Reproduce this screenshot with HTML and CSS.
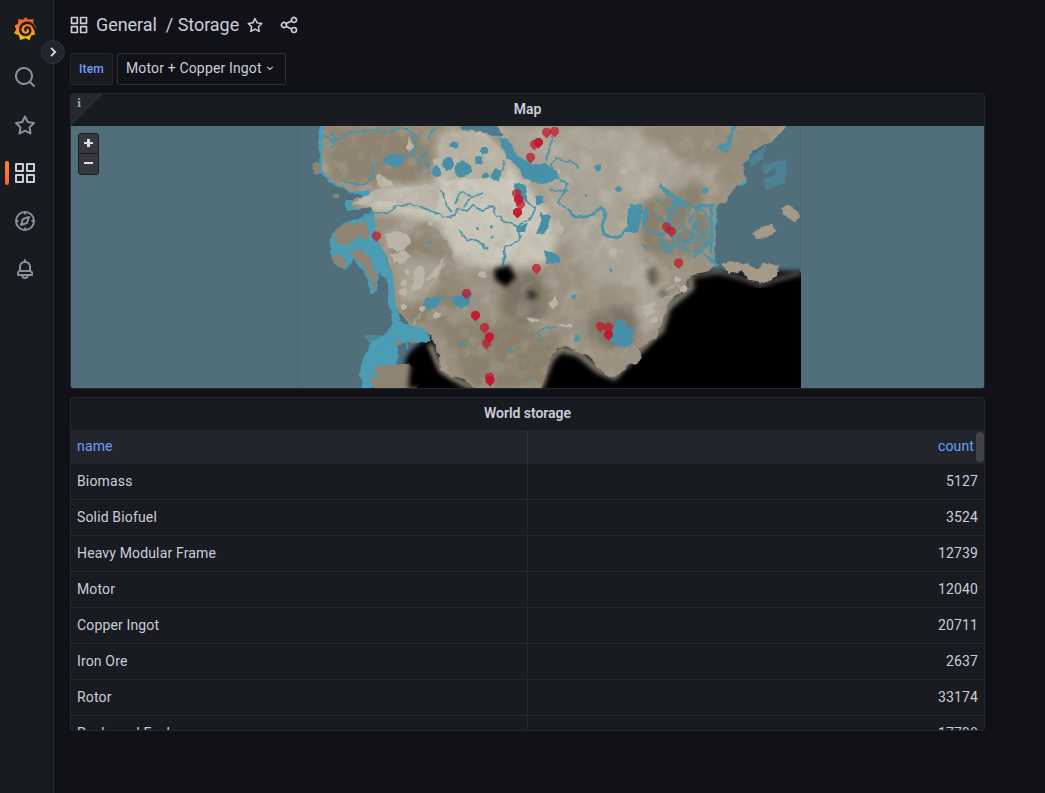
FILE: index.html
```html
<!DOCTYPE html>
<html lang="en">
<head>
<meta charset="utf-8">
<title>General / Storage</title>
<link rel="stylesheet" href="styles.css">
</head>
<body>
<svg class="defs" width="0" height="0">
  <symbol id="apps" viewBox="0 0 24 24"><path d="M10,13H3a1,1,0,0,0-1,1v7a1,1,0,0,0,1,1h7a1,1,0,0,0,1-1V14A1,1,0,0,0,10,13ZM9,20H4V15H9ZM21,2H14a1,1,0,0,0-1,1v7a1,1,0,0,0,1,1h7a1,1,0,0,0,1-1V3A1,1,0,0,0,21,2ZM20,9H15V4h5Zm1,4H14a1,1,0,0,0-1,1v7a1,1,0,0,0,1,1h7a1,1,0,0,0,1-1V14A1,1,0,0,0,21,13Zm-1,7H15V15h5ZM10,2H3A1,1,0,0,0,2,3v7a1,1,0,0,0,1,1h7a1,1,0,0,0,1-1V3A1,1,0,0,0,10,2ZM9,9H4V4H9Z"/></symbol>
  <symbol id="star" viewBox="0 0 24 24"><path d="M22,9.67A1,1,0,0,0,21.14,9l-5.69-.83L12.9,3a1,1,0,0,0-1.8,0L8.55,8.16,2.86,9a1,1,0,0,0-.81.68,1,1,0,0,0,.25,1l4.13,4-1,5.68A1,1,0,0,0,6.9,21.44L12,18.77l5.1,2.67a.93.93,0,0,0,.46.12,1,1,0,0,0,.59-.19,1,1,0,0,0,.4-1l-1-5.68,4.13-4A1,1,0,0,0,22,9.67Zm-6.15,4a1,1,0,0,0-.29.88l.72,4.2-3.76-2a1.06,1.06,0,0,0-.94,0l-3.76,2,.72-4.2a1,1,0,0,0-.29-.88l-3-3,4.21-.61a1,1,0,0,0,.76-.55L12,5.7l1.88,3.82a1,1,0,0,0,.76.55l4.21.61Z"/></symbol>
</svg>
<div class="app">
  <nav class="sidebar">
    <a class="nav-item logo">
      <svg width="24" height="26" viewBox="0 0 24 26">
        <defs><linearGradient id="lg" x1="0" y1="0" x2="0" y2="1"><stop offset="0" stop-color="#f1502a"/><stop offset=".45" stop-color="#f5802a"/><stop offset="1" stop-color="#fcc80c"/></linearGradient></defs>
        <path fill="url(#lg)" d="M12.8 1 15 3.6 20.3 3.1 20.4 7.2 23 11 21.2 13.8 22 18.6 18.2 19.6 16.5 24.2 12.8 22.3 7 24 6 19.6 1 17.3 3.1 13.2 1.6 9.4 5 7.8 5.4 3 10 3.8Z"/>
        <path fill="none" stroke="#181b1f" stroke-width="2.4" stroke-linecap="round" d="M21.500 12.500C20.500 8 16.500 6 12.500 7 8.500 8 6.500 11.500 7.300 15 8.300 19 13.500 20.200 16.200 17.600 18.300 15.500 17.400 12 14.800 11.500 12.800 11.200 11.600 12.900 12.600 14.400"/>
      </svg>
    </a>
    <a class="nav-item"><svg class="i24" viewBox="0 0 24 24"><path d="M21.71,20.29,18,16.61A9,9,0,1,0,16.61,18l3.68,3.68a1,1,0,0,0,1.42,0A1,1,0,0,0,21.71,20.29ZM11,18a7,7,0,1,1,7-7A7,7,0,0,1,11,18Z"/></svg></a>
    <a class="nav-item"><svg class="i24"><use href="#star"/></svg></a>
    <a class="nav-item active"><svg class="i24"><use href="#apps"/></svg></a>
    <a class="nav-item"><svg class="i24 line" viewBox="0 0 24 24"><circle cx="12" cy="12" r="9"/><path d="M16 8 14 14 8 16 10 10ZM12 3V5.500M12 18.500V21M3 12H5.500M18.500 12H21"/></svg></a>
    <a class="nav-item"><svg class="i24" viewBox="0 0 24 24"><path d="M18,13.18V10a6,6,0,0,0-5-5.91V3a1,1,0,0,0-2,0V4.09A6,6,0,0,0,6,10v3.18A3,3,0,0,0,4,16v2a1,1,0,0,0,1,1H8.14a4,4,0,0,0,7.72,0H19a1,1,0,0,0,1-1V16A3,3,0,0,0,18,13.18ZM8,10a4,4,0,0,1,8,0v3H8Zm4,10a2,2,0,0,1-1.72-1h3.44A2,2,0,0,1,12,20Zm6-3H6V16a1,1,0,0,1,1-1H17a1,1,0,0,1,1,1Z"/></svg></a>
    <button class="toggle"><svg width="12" height="12" viewBox="0 0 12 12"><path d="M4 1.800 8.200 6 4 10.200"/></svg></button>
  </nav>
  <main class="main">
    <header class="toolbar">
      <svg class="i19"><use href="#apps"/></svg>
      <h1 class="crumbs"><span>General</span><span>/ Storage</span></h1>
      <svg class="i18"><use href="#star"/></svg>
      <svg class="i19 share" viewBox="0 0 24 24"><path d="M18,14a4,4,0,0,0-3.08,1.48l-5.1-2.35a3.64,3.64,0,0,0,0-2.26l5.1-2.35A4,4,0,1,0,14,6a4.17,4.17,0,0,0,.07.71L8.79,9.14a4,4,0,1,0,0,5.72l5.28,2.43A4.17,4.17,0,0,0,14,18a4,4,0,1,0,4-4ZM18,4a2,2,0,1,1-2,2A2,2,0,0,1,18,4ZM6,14a2,2,0,1,1,2-2A2,2,0,0,1,6,14Zm12,6a2,2,0,1,1,2-2A2,2,0,0,1,18,20Z"/></svg>
    </header>
    <div class="vars">
      <span class="var-label">Item</span>
      <span class="var-value">Motor + Copper Ingot<svg width="8" height="8" viewBox="0 0 8 8"><path d="M1.300 2.800 4 5.400 6.700 2.800"/></svg></span>
    </div>
    <section class="panel map-panel">
      <span class="corner"></span><span class="info">i</span>
      <h2 class="title">Map</h2>
      <div class="map">
        <svg class="world" width="913" height="262" viewBox="71 126 913 262">
          <defs>
            <filter id="rough" x="-5%" y="-5%" width="110%" height="110%"><feTurbulence type="fractalNoise" baseFrequency=".13" numOctaves="2" seed="4" result="n"/><feDisplacementMap in="SourceGraphic" in2="n" scale="5" xChannelSelector="R" yChannelSelector="G"/><feGaussianBlur stdDeviation=".55"/></filter>
            <filter id="soft"><feGaussianBlur stdDeviation="4"/></filter>
            <filter id="halo" x="-20%" y="-20%" width="140%" height="140%"><feGaussianBlur stdDeviation="2.5"/></filter>
            <filter id="grain" x="0" y="0" width="100%" height="100%"><feTurbulence type="fractalNoise" baseFrequency=".05" numOctaves="4" seed="9"/><feColorMatrix values="0 0 0 0 .84  0 0 0 0 .82  0 0 0 0 .77  2.4 0 0 0 -1.1"/></filter>
            <filter id="shade" x="0" y="0" width="100%" height="100%"><feTurbulence type="fractalNoise" baseFrequency=".06" numOctaves="4" seed="21"/><feColorMatrix values="0 0 0 0 .3  0 0 0 0 .27  0 0 0 0 .22  2.4 0 0 0 -1.15"/></filter>
            <path id="land" d="M324 124 L322 170 L336 184 L353 192 L371 190 L369 195 L354 200 L350 206 L358 209 L371 207 L374 215 L377 240 L386 254 L393 275 L396 308 L410 325 L424 329 L431 336 L438 352 L441 370 L452 377 L466 380 L476 390 H541 L546 374 L550 359 L557 347 L568 346 L577 352 L591 358 L600 370 L612 376 L624 370 L639 350 L655 338 L662 325 L667 306 L674 296 L690 290 L686 283 L690 276 L709 272 L714 264 L715 207 L725 202 L735 187 L745 180 L743 164 L752 151 L773 140 L789 124Z"/>
            <clipPath id="lc"><use href="#land"/></clipPath>
            <path id="p" d="M-2-5H2L4.500-2.500V1L0 5.500-4.500 1V-2.500Z"/>
          </defs>
          <path class="sea" d="M71 126H984V388H71Z"/>
          <path d="M402 392 406 358 416 346 430 336 550 345 640 340 696 271 801 271 812 271V392Z" fill="#000" filter="url(#halo)"/>
          <g fill="none" stroke="#8f897c" stroke-width="6" filter="url(#halo)"><path d="M430 344 440 370 452 378 474 388M540 388 550 360 560 349 578 353 598 370 614 377 638 352 661 330 668 307 691 288 690 277"/></g>
          <path d="M690 277 718 272 738 277 760 285 775 280 801 273" fill="none" stroke="#77756c" stroke-width="3" filter="url(#halo)"/>
          <g class="water" filter="url(#rough)">
            <path d="M320 124H328V168L344 183 373 189 392 182 392 196 366 198 350 192 334 185 319 172ZM346 200H360V210H346ZM371 212 383 220 384 250 394 278 396 306 402 324 425 329 431 341 421 343 398 342 397 362 391 368 382 372 384 388H364L359 376 363 360 371 342 384 335 393 323 389 302 387 281 379 273 377 291 371 294 365 274 353 257 348 269 338 268 330 252 331 236 344 223 362 217ZM789 124 773 138 753 151 744 164 746 184 735 186 738 164 750 150 775 128Z"/>
            <path d="M710 202 717 200 715 265 706 268Z"/>
            <path d="M364 334 385 336 388 342 378 350 368 344Z" opacity=".55"/>
          </g>
          <g fill="#4d8193" filter="url(#rough)"><path d="M748 159 766 145 764 158 750 166ZM762 166 774 162 778 160 786 160 786 183 766 189 763 179 774 176 776 168 764 174Z"/></g>
          <g filter="url(#rough)">
            <use href="#land" fill="#9b9180"/>
            <path fill="#a39a89" d="M721 264 730 261 742 264 740 271 729 274ZM738 268 746 263 757 269 764 262 778 266 777 276 764 284 751 281ZM780 207 789 205 798 211 800 217 794 222 783 214ZM753 233 763 227 773 224 776 231 766 238 757 239Z"/>
            <path fill="#8f8473" d="M334 233Q338 224 350 223L366 222 370 235 363 247 348 249 336 243ZM332 254 340 254 348 265 343 269 335 264ZM348 252 360 248 371 260 377 277 374 291 369 277 361 264ZM372 371Q382 364 391 364L406 363 418 370 420 380 415 392H378L370 381ZM314 163 319 163 320 170 317 175 313 172ZM332 194H338V198H332ZM396 340H400V345H396ZM411 339H415V344H411Z"/>
            <path fill="#9c9586" d="M625 356a8 8 0 1 0 16 0 8 8 0 1 0-16 0M604 371a8 6 0 1 0 16 0"/>
          </g>
          <g class="water" filter="url(#rough)"><ellipse cx="374" cy="376" rx="4" ry="3"/><path d="M344 246 360 236 372 244 373 250 362 246 350 252Z"/></g>
          <g clip-path="url(#lc)">
            <g filter="url(#soft)">
              <path fill="#8e836f" d="M326 126H430L440 160 410 185 370 188 330 178ZM388 250 430 222 445 250 460 300 445 330 402 320Z"/>
              <path fill="#c8c4b8" d="M440 135 480 130 505 155 548 210 560 240 545 265 490 268 455 260 440 225 375 210 360 200 385 188 435 185Z"/>
              <path fill="#aaa496" d="M490 126H640L650 180 690 175 640 240 650 290 590 280 565 235 520 160Z"/>
              <path fill="#6f6657" d="M505 280 530 270 548 285 545 315 520 325 500 310ZM590 315 625 303 645 330 618 352 590 338Z" opacity=".7"/>
              <path fill="#8a7f6c" d="M440 325 500 320 560 335 550 388H470ZM640 200 700 185 712 240 690 260 640 250Z"/>
              <path fill="#958b79" d="M640 126H780L735 180 695 185Z"/>
              <path fill="#b5aea0" d="M630 130 690 165 723 185 716 190 680 170 640 205 620 190ZM395 255 445 260 440 282 425 300 400 305ZM635 270 665 285 660 325 640 335Z" opacity=".7"/>
            </g>
            <path fill="#b8b2a4" d="M445 136Q462 127 491 138L510 160 505 178 445 180 433 173ZM376 176 379 173 396 186 380 188Z" filter="url(#rough)"/>
            <path fill="#bdb7ab" d="M352 205 374 190 388 188 400 192 422 185 440 186 436 210 404 208 390 200 370 203Z" filter="url(#rough)"/>
            <path fill="#948a79" d="M411 229 425 222 438 230 452 250 454 264 439 258 424 246ZM445 260 463 276 470 294 448 297 440 280Z" filter="url(#rough)" opacity=".8"/>
            <path fill="#5c5547" d="M647 271 655 266 658 282 651 287ZM658 290 668 291 666 298 660 297Z" filter="url(#halo)"/>
            <rect x="300" y="126" width="500" height="262" filter="url(#grain)" opacity=".22"/>
            <rect x="300" y="126" width="500" height="262" filter="url(#shade)" opacity=".26"/>
            <g fill="#bab4a7" filter="url(#rough)">
              <path d="M385 235 399 231 408 234 410 242 404 250 397 252 388 246ZM391 255 405 250 410 256 402 264 394 263ZM415 268 423 266 426 280 418 290 411 291 413 280ZM406 148 410 136 414 146 410 152ZM553 225 559 219 563 230 548 237ZM525 316 540 320 533 324ZM548 305 555 296 558 304 552 310ZM558 324 571 324 571 328ZM642 306 651 302 655 313 646 318ZM434 270 444 258 438 276 426 280Z"/>
              <circle cx="403" cy="292" r="4.500"/><circle cx="422" cy="309" r="3"/><circle cx="437" cy="315" r="3"/><circle cx="613" cy="252" r="4"/><circle cx="624" cy="171" r="4"/><circle cx="557" cy="171" r="3"/><circle cx="437" cy="163" r="3.500"/><circle cx="638" cy="215" r="4.500"/><circle cx="653" cy="304" r="3"/><circle cx="431" cy="223" r="3"/><circle cx="684" cy="289" r="4"/><circle cx="483" cy="274" r="4"/><circle cx="480" cy="139" r="4"/><circle cx="404" cy="307" r="3"/><circle cx="407" cy="272" r="2.500"/><circle cx="404" cy="283" r="3"/><circle cx="654" cy="320" r="3"/><circle cx="677" cy="279" r="3"/><circle cx="560" cy="229" r="4"/><circle cx="525" cy="181" r="4"/>
            </g>
            <g fill="none" stroke="#b7b0a2" stroke-width="2" opacity=".6" filter="url(#rough)"><path d="M420 312 412 328M445 262 438 275 427 290M665 292 676 283 684 290M662 299 678 292"/></g>
          </g>
          <g class="deep" filter="url(#rough)">
            <ellipse cx="394" cy="160" rx="10" ry="6.500"/><circle cx="448" cy="164" r="6"/><circle cx="463" cy="169" r="8.500"/><circle cx="454" cy="144" r="3.500"/><circle cx="437" cy="172" r="5"/><circle cx="479" cy="160" r="4"/><circle cx="484" cy="151" r="3"/><circle cx="496" cy="175" r="5.500"/><circle cx="485" cy="176" r="3"/>
            <path d="M499 138 508 139 513 151 526 162 545 164 556 170 560 178 543 184 532 183 522 176 517 165 506 157ZM514 182 525 185 528 203 516 196ZM517 226 528 224 524 233 518 232ZM594 166 600 164 602 168 597 172ZM534 197 543 196 545 202 537 205ZM541 213 550 216 549 226 544 234 534 235 540 226ZM542 249 550 251 561 257 560 263 547 263ZM427 298 440 296 438 305 430 310 423 304ZM454 296 471 292 470 305 462 309 452 304ZM618 319 624 320 627 328 634 327 631 344 620 347 608 338ZM571 296 576 294 575 300 570 299ZM628 209 641 203 641 220 638 232 626 233ZM461 294 468 297 470 302 464 308 455 304Z"/>
          </g>
          <path d="M460 122H492L504 135 492 136 480 131 462 130Z" fill="#4b7c8f" filter="url(#rough)"/>
          <g class="river" filter="url(#rough)">
            <path d="M323 135 332 140 345 137 350 132 377 130 387 133 401 127 412 132 417 140 413 154 420 164 427 165 430 174M417 146 426 151 422 156 430 167M435 126 428 141M330 149 334 146 332 132M403 157 388 163 373 165 372 179 362 185 341 181M403 157 413 154M361 220 372 213 385 213 399 205 417 205 431 211 440 214 444 218 455 215 458 209 467 211 472 206 482 210 493 206 495 213 503 221 517 226 526 221 533 217 534 207 526 200 526 190M442 189 445 202 452 212M464 207 470 198 483 193M455 204 460 192 474 196M459 230 468 241 475 240 489 250M504 262 506 246 518 241 520 236 517 230M504 160 504 169 498 178M549 172 555 159 573 162 579 169M560 180 568 184 563 194 558 202 566 208M550 190 568 191"/>
            <path d="M440 300 450 296 460 295M539 342 539 332 544 328 557 326M503 265 504 250M552 136 547 161M407 340 407 350"/>
          </g>
          <g fill="#4a94aa" filter="url(#rough)"><circle cx="430" cy="242" r="1.500"/><circle cx="441" cy="251" r="1.500"/><circle cx="464" cy="345" r="2.500"/><circle cx="511" cy="351" r="2.500"/><circle cx="531" cy="380" r="2"/><circle cx="577" cy="338" r="3"/><circle cx="586" cy="195" r="2"/><circle cx="619" cy="188" r="3"/><circle cx="705" cy="191" r="2.500"/><circle cx="492" cy="227" r="2"/><circle cx="478" cy="228" r="2"/><circle cx="492" cy="237" r="1.500"/><circle cx="610" cy="270" r="1.500"/></g>
          <path class="river mid" filter="url(#rough)" d="M567 209 577 218 590 216 602 207 606 214 602 225 604 235 612 238 622 235 630 224 634 210"/>
          <path class="river mid" filter="url(#rough)" d="M640 208 647 220M668 196 660 184 666 190 678 200 668 213 672 230 660 236 645 229 643 218 650 208M680 200 695 207 713 205M711 206 712 220 711 241 711 255M735 126 729 140 728 151 720 147 731 143M640 207 630 206M706 256 718 265"/>
          <path class="river" filter="url(#rough)" d="M678 202 692 206 704 211 710 220 706 229 711 241 700 248 693 257M662 190 671 196 677 209 675 218M684 217 678 231 682 242 696 241 706 230M696 219 692 233 699 242 707 238M680 235 689 251 701 250 707 256M663 238 672 249 666 254 660 243M687 215 697 226 705 218M674 236 684 252M693 260 712 240M655 213 668 226 674 246 690 249M657 199 668 206M668 191 681 205 689 211M681 225 693 236 686 244M698 207 690 223 703 238M658 241 672 252M642 245 648 249"/>
          <g fill="#000"><path filter="url(#halo)" d="M494 269 509 265 516 277 506 287 495 280ZM412 352 426 350 438 374 460 388H408Z"/><path filter="url(#halo)" fill="#33302e" d="M526 293 532 289 538 296 531 301Z"/></g>
          <path d="M297.500 126V388" stroke="#456672" fill="none"/>
          <path class="sea" d="M801 126H984V388H801Z"/>
          <path d="M800.500 126V272" stroke="#49626d"/>
          <g fill="#c4162a">
            <g fill-opacity=".72"><use href="#p" x="546.500" y="133"/><use href="#p" x="554.500" y="132"/><use href="#p" x="534.500" y="145"/><use href="#p" x="530.500" y="158"/><use href="#p" x="516.500" y="194"/><use href="#p" x="520.500" y="205"/><use href="#p" x="376.500" y="236.500"/><use href="#p" x="666.500" y="227.500"/><use href="#p" x="671.500" y="232"/><use href="#p" x="678.500" y="263.500"/><use href="#p" x="536.500" y="269"/><use href="#p" x="466.500" y="294"/><use href="#p" x="484.500" y="328"/><use href="#p" x="486.500" y="344"/><use href="#p" x="600.500" y="327"/><use href="#p" x="608.500" y="328"/><use href="#p" x="489.500" y="377.500"/></g>
            <g fill-opacity=".95"><use href="#p" x="538.500" y="143"/><use href="#p" x="518.500" y="200"/><use href="#p" x="517.500" y="213"/><use href="#p" x="475.500" y="316"/><use href="#p" x="489.500" y="337.500"/><use href="#p" x="608.500" y="335"/><use href="#p" x="490" y="381"/></g>
          </g>
        </svg>
        <div class="zoomer"><b class="plus"></b><b class="minus"></b></div>
      </div>
    </section>
    <section class="panel table-panel">
      <h2 class="title">World storage</h2>
      <div class="row head"><span>name</span><span>count</span></div>
      <div class="row"><span>Biomass</span><span>5127</span></div>
      <div class="row"><span>Solid Biofuel</span><span>3524</span></div>
      <div class="row"><span>Heavy Modular Frame</span><span>12739</span></div>
      <div class="row"><span>Motor</span><span>12040</span></div>
      <div class="row"><span>Copper Ingot</span><span>20711</span></div>
      <div class="row"><span>Iron Ore</span><span>2637</span></div>
      <div class="row"><span>Rotor</span><span>33174</span></div>
      <div class="row"><span>Packaged Fuel</span><span>17798</span></div>
      <i class="thumb"></i>
    </section>
  </main>
</div>
</body>
</html>
```
FILE: styles.css
```css
* { box-sizing: border-box; }
body { margin: 0; background: #111217; color: #ccccdc; font: 14px/20px Roboto, sans-serif; letter-spacing: .15px; overflow: hidden; }
svg { display: block; flex: none; }
.defs { position: absolute; }
.app { display: flex; height: 793px; }
.sidebar { position: relative; width: 54px; background: #181b1f; border-right: 1px solid #25272c; padding-top: 5px; flex: none; }
.nav-item { position: relative; display: flex; align-items: center; justify-content: center; height: 48px; padding-right: 3px; color: #8e8e9b; }
.logo { padding-right: 4px; }
.i24 { width: 24px; height: 24px; fill: currentColor; }
.i19 { width: 20px; height: 20px; fill: currentColor; }
.i18 { width: 18px; height: 18px; fill: currentColor; }
.line { fill: none; stroke: currentColor; stroke-width: 2; stroke-linejoin: round; }
.line path { stroke-width: 2; }
.active { color: #ccccdc; }
.active::before { content: ""; position: absolute; left: 5px; top: 12px; width: 4px; height: 24px; border-radius: 2px; background: linear-gradient(#ff8833, #f55f3e); }
.toggle { position: absolute; left: 41px; top: 40px; width: 24px; height: 24px; padding: 0; border: 1px solid #2d2f36; border-radius: 50%; background: #22252b; display: flex; align-items: center; justify-content: center; }
.toggle path { fill: none; stroke: #dcdce8; stroke-width: 1.8; }
.main { width: 931px; padding-left: 16px; }
.toolbar { display: flex; align-items: center; height: 50px; }
.toolbar .i19:first-child { margin-left: -1px; }
.crumbs { display: flex; gap: 9px; margin: 0 7px; font-size: 18px; font-weight: 400; letter-spacing: -.05px; white-space: nowrap; }
.share { margin-left: 15px; }
.vars { display: flex; gap: 4px; margin-top: 3px; height: 32px; }
.var-label { width: 43px; border: 1px solid #25272c; border-radius: 2px; background: #181b1f; color: #6e9fff; font-size: 12px; font-weight: 500; line-height: 30px; text-align: center; }
.var-value { display: flex; align-items: center; gap: 4px; width: 169px; border: 1px solid #2e3036; border-radius: 2px; padding: 0 0 2px 8px; white-space: nowrap; line-height: 28px; }
.var-value path { fill: none; stroke: #ccccdc; stroke-width: 1.1; }
.panel { position: relative; width: 915px; border: 1px solid #25272c; border-radius: 3px; background: #181b1f; overflow: hidden; }
.map-panel { margin-top: 8px; height: 296px; }
.title { margin: 0; height: 32px; text-align: center; font-size: 14px; line-height: 31px; font-weight: 600; letter-spacing: -.05px; }
.corner { position: absolute; left: 0; top: 0; border-top: 32px solid #26292e; border-right: 32px solid transparent; }
.info { position: absolute; left: 6px; top: 1px; color: #9d9eaa; font: bold 11px/18px "DejaVu Serif", serif; }
.map { position: relative; height: 262px; overflow: hidden; }
.sea { fill: #516f7a; }
.water { fill: #4b9db4; }
.deep { fill: #4690a8; }
.river { fill: none; stroke: #4a94aa; stroke-width: 1.7; }
.mid { stroke-width: 3; }
.zoomer { position: absolute; left: 7px; top: 7px; width: 21px; height: 42px; border: 1px solid #1c1e22; border-radius: 3px; background: #36383e; }
.zoomer::before { content: ""; position: absolute; top: 19px; width: 19px; height: 1px; background: #1c1e22; }
.plus, .minus { position: absolute; left: 5px; top: 8px; width: 9px; height: 2px; background: #dcdce6; }
.plus::after { content: ""; position: absolute; left: 3px; top: -3px; width: 3px; height: 8px; background: #dcdce6; }
.minus { top: 28px; }
.table-panel { margin-top: 8px; height: 334px; }
.row { display: grid; grid-template-columns: 457px 456px; height: 36px; line-height: 34px; border-bottom: 1px solid #25272c; }
.row span { padding: 0 6px; border-right: 1px solid #25272c; }
.row span + span { text-align: right; border-right: 0; }
.head { height: 34px; line-height: 32px; background: #22252b; color: #6e9fff; border-bottom: 0; }
.head span { border-color: #303238; }
.head span + span { padding-right: 10px; }
.thumb { position: absolute; right: 0; top: 34px; width: 8px; height: 30px; border-radius: 4px; background: #404248; }
```
